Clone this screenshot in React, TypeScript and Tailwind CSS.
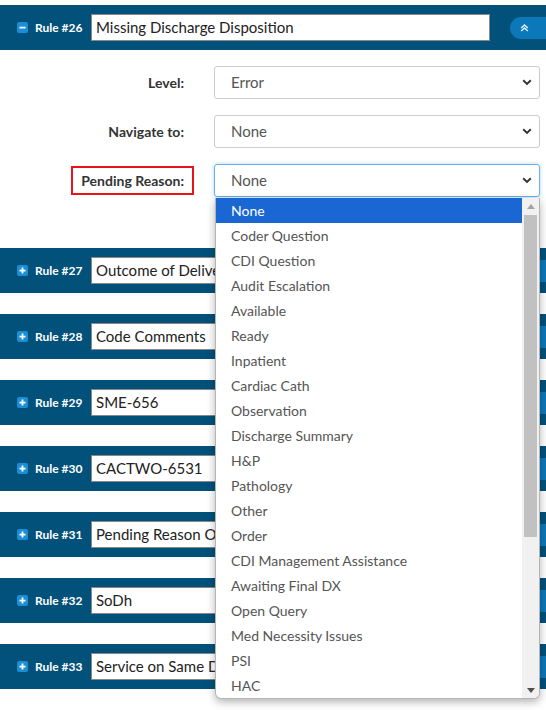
import React from "react";

const items = [
  "None",
  "Coder Question",
  "CDI Question",
  "Audit Escalation",
  "Available",
  "Ready",
  "Inpatient",
  "Cardiac Cath",
  "Observation",
  "Discharge Summary",
  "H&P",
  "Pathology",
  "Other",
  "Order",
  "CDI Management Assistance",
  "Awaiting Final DX",
  "Open Query",
  "Med Necessity Issues",
  "PSI",
  "HAC",
];

const rules = [
  { n: 27, t: "Outcome of Delivery" },
  { n: 28, t: "Code Comments" },
  { n: 29, t: "SME-656" },
  { n: 30, t: "CACTWO-6531" },
  { n: 31, t: "Pending Reason Options" },
  { n: 32, t: "SoDh" },
  { n: 33, t: "Service on Same Day" },
];

function SquareIcon({ plus }: { plus: boolean }) {
  return (
    <svg width="11" height="11" viewBox="0 0 11 11" className="shrink-0">
      <rect x="0" y="0" width="11" height="11" rx="2" fill="#1b8fd6" />
      <rect x="2.5" y="4.7" width="6" height="1.8" fill="#fff" />
      {plus && <rect x="4.6" y="2.5" width="1.8" height="6" fill="#fff" />}
    </svg>
  );
}

function Chevron() {
  return (
    <svg width="10" height="7" viewBox="0 0 10 7" className="shrink-0">
      <path d="M1.2 1.3 L5 5 L8.8 1.3" fill="none" stroke="#333" strokeWidth="1.9" />
    </svg>
  );
}

function RuleBar({ n, t, open }: { n: number; t: string; open?: boolean }) {
  return (
    <div className="h-[45px] bg-[#02517b] flex items-center pl-[17px] relative">
      <SquareIcon plus={!open} />
      <span className="ml-[7px] w-[56px] text-white text-[12px] font-bold whitespace-nowrap leading-[16px]">Rule #{n}</span>
      <div className="h-[27px] w-[399px] bg-white border border-[#888] flex items-center pl-[4px] text-[15px] text-[#222] overflow-hidden whitespace-nowrap">
        {t}
      </div>
      <div className="absolute left-[510px] top-[12px] w-[60px] h-[22px] rounded-full bg-[#0b78ba] flex items-center pl-[10px]">
        <svg width="9" height="8" viewBox="0 0 9 8">
          <path d="M1.2 4 L4.5 1 L7.8 4 M1.2 7 L4.5 4 L7.8 7" fill="none" stroke="#dfeefa" strokeWidth="1.5" />
        </svg>
      </div>
    </div>
  );
}

function SelectRow({ label, value, focused, boxed }: { label: string; value: string; focused?: boolean; boxed?: boolean }) {
  return (
    <div className="flex items-center h-[33px]">
      <div className="w-[184px] flex justify-end">
        <span
          className={
            boxed
              ? "text-[14px] font-bold text-[#333] border-2 border-[#e8141a] px-[8px] py-[2px] -mr-[10px]"
              : "text-[14px] font-bold text-[#333]"
          }
        >
          {label}
        </span>
      </div>
      <div
        className={
          focused
            ? "ml-[30px] w-[326px] h-[33px] rounded-[3px] border border-[#66afe9] shadow-[0_0_4px_rgba(102,175,233,0.5)] flex items-center justify-between pl-[16px] pr-[7px] text-[15px] text-[#555]"
            : "ml-[30px] w-[326px] h-[33px] rounded-[3px] border border-[#ccc] flex items-center justify-between pl-[16px] pr-[7px] text-[15px] text-[#555]"
        }
      >
        <span>{value}</span>
        <Chevron />
      </div>
    </div>
  );
}

export default function App() {
  return (
    <div
      className="w-[546px] h-[710px] relative overflow-hidden bg-white pt-[5px]"
      style={{ fontFamily: "Lato, 'Open Sans', sans-serif" }}
    >
      <RuleBar n={26} t="Missing Discharge Disposition" open />
      <div className="pt-[16px] flex flex-col gap-[16px]">
        <SelectRow label="Level:" value="Error" />
        <SelectRow label="Navigate to:" value="None" />
        <SelectRow label="Pending Reason:" value="None" focused boxed />
      </div>
      <div className="mt-[51px] flex flex-col gap-[21px]">
        {rules.map((r) => (
          <RuleBar key={r.n} n={r.n} t={r.t} />
        ))}
      </div>

      <div className="absolute left-[215px] top-[198px] w-[325px] h-[501px] bg-white border border-[#b5b5b5] border-t-0 rounded-b-[6px] shadow-[0_3px_8px_rgba(0,0,0,0.3)] flex overflow-hidden">
        <div className="flex-1 flex flex-col">
          {items.map((it, i) => (
            <div
              key={it}
              className={
                i === 0
                  ? "h-[25px] shrink-0 flex items-center pl-[15px] text-[14px] bg-[#1a66d2] text-white"
                  : "h-[25px] shrink-0 flex items-center pl-[15px] text-[14px] text-[#555]"
              }
            >
              {it}
            </div>
          ))}
        </div>
        <div className="w-[17px] bg-[#f1f1f1] flex flex-col items-center">
          <div className="h-[17px] flex items-center justify-center">
            <svg width="8" height="5" viewBox="0 0 8 5"><path d="M0 5 L4 0 L8 5 Z" fill="#a3a3a3" /></svg>
          </div>
          <div className="w-[13px] h-[322px] bg-[#c1c1c1]" />
          <div className="flex-1" />
          <div className="h-[16px] flex items-center justify-center">
            <svg width="8" height="5" viewBox="0 0 8 5"><path d="M0 0 L8 0 L4 5 Z" fill="#505050" /></svg>
          </div>
        </div>
      </div>
    </div>
  );
}
